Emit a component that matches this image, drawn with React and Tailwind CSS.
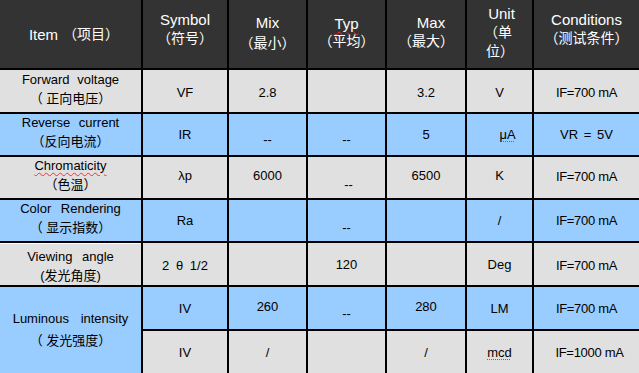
import React from "react";

/* ===== Styles ===== */
const font = "font-['Liberation_Sans','Noto_Sans_CJK_SC',sans-serif]";
const head = "bg-[#333333] text-white flex flex-col items-center justify-center text-[15px] leading-[19px]";
const cjk = "text-[14px] [font-feature-settings:'halt']";
const gray = "bg-[#e0e0e0]";
const blue = "bg-[#99ccff]";
const cell = "flex flex-col items-center justify-center text-[13px] leading-[19px] text-black";
const wavy = "underline decoration-wavy decoration-red-500 decoration-1 underline-offset-2";
const dotted = "underline decoration-dotted decoration-red-500 decoration-1 underline-offset-2";

const Dash = ({ bg, pb = "pb-[6px]", x = "" }) => (
  <div className={`${bg} ${cell} justify-end ${pb} ${x}`}>--</div>
);

export default function App() {
  return (
    <div
      className={`${font} w-[639px] h-[373px] bg-black grid gap-[2px] grid-cols-[141px_84px_77px_77px_78px_65px_105px] grid-rows-[68px_42px_41px_41px_41px_42px_42px_42px] overflow-hidden`}
    >
      {/* header */}
      <div className={`${head} flex-row`}>
        <span>Item</span>
        <span className={`${cjk} ml-3`}>（项目）</span>
      </div>
      <div className={`${head} pb-[10px]`}>
        <span>Symbol</span>
        <span className={cjk}>（符号）</span>
      </div>
      <div className={`${head} pb-[4px]`}>
        <span className="pt-[2px]">Mix</span>
        <span className={`${cjk} pt-[2px]`}>（最小）</span>
      </div>
      <div className={`${head} pb-[4px]`}>
        <span className={wavy}>Typ</span>
        <span className={`${cjk} -mt-[1px]`}>（平均）</span>
      </div>
      <div className={`${head} pb-[4px]`}>
        <span className="pl-[10px]">Max</span>
        <span className={cjk}>（最大）</span>
      </div>
      <div className={`${head} pb-[4px]`}>
        <span className="pl-[4px]">Unit</span>
        <span className={`${cjk} pl-[4px]`}>（单</span>
        <span className={`${cjk} pr-[6px]`}>位）</span>
      </div>
      <div className={`${head} pb-[10px]`}>
        <span>Conditions</span>
        <span className={cjk}>（测试条件）</span>
      </div>

      {/* Forward voltage */}
      <div className={`${gray} ${cell} pb-[4px]`}>
        <span className="[word-spacing:4px]">Forward voltage</span>
        <span>（ 正向电压）</span>
      </div>
      <div className={`${gray} ${cell} pt-[2px]`}>VF</div>
      <div className={`${gray} ${cell} pt-[2px]`}>2.8</div>
      <div className={gray}></div>
      <div className={`${gray} ${cell} pt-[2px]`}>3.2</div>
      <div className={`${gray} ${cell} pt-[2px]`}>V</div>
      <div className={`${gray} ${cell} pt-[2px] tracking-[-0.3px]`}>IF=700 mA</div>

      {/* Reverse current */}
      <div className={`${blue} ${cell} pb-[6px]`}>
        <span className="[word-spacing:5px]">Reverse current</span>
        <span>（反向电流）</span>
      </div>
      <div className={`${blue} ${cell}`}>IR</div>
      <Dash bg={blue} />
      <Dash bg={blue} />
      <div className={`${blue} ${cell}`}>5</div>
      <div className={`${blue} ${cell} pl-[16px]`}>
        <span className={dotted}>μA</span>
      </div>
      <div className={`${blue} ${cell} [word-spacing:2px]`}>VR = 5V</div>

      {/* Chromaticity */}
      <div className={`${gray} ${cell} pb-[6px]`}>
        <span className={wavy}>Chromaticity</span>
        <span>（色温）</span>
      </div>
      <div className={`${gray} ${cell} pb-[4px]`}>λp</div>
      <div className={`${gray} ${cell} pb-[4px]`}>6000</div>
      <Dash bg={gray} pb="pb-[4px]" x="pl-[4px]" />
      <div className={`${gray} ${cell} pb-[4px]`}>6500</div>
      <div className={`${gray} ${cell} pb-[4px]`}>K</div>
      <div className={`${gray} ${cell} pb-[2px] tracking-[-0.3px]`}>IF=700 mA</div>

      {/* Color Rendering */}
      <div className={`${blue} ${cell} pb-[6px]`}>
        <span className="[word-spacing:6px]">Color Rendering</span>
        <span>（ 显示指数）</span>
      </div>
      <div className={`${blue} ${cell}`}>Ra</div>
      <div className={blue}></div>
      <Dash bg={blue} pb="pb-[4px]" />
      <div className={blue}></div>
      <div className={`${blue} ${cell}`}>/</div>
      <div className={`${blue} ${cell} tracking-[-0.3px]`}>IF=700 mA</div>

      {/* Viewing angle */}
      <div className={`${gray} ${cell} pt-[3px] border-t border-white`}>
        <span className="[word-spacing:6px]">Viewing angle</span>
        <span>(发光角度)</span>
      </div>
      <div className={`${gray} ${cell} pt-[2px] [word-spacing:3px]`}>2 θ 1/2</div>
      <div className={gray}></div>
      <div className={`${gray} ${cell}`}>120</div>
      <div className={gray}></div>
      <div className={`${gray} ${cell}`}>Deg</div>
      <div className={`${gray} ${cell} pt-[2px] tracking-[-0.3px]`}>IF=700 mA</div>

      {/* Luminous intensity */}
      <div className={`${blue} ${cell} row-span-2 pb-[2px]`}>
        <span className="[word-spacing:8px]">Luminous intensity</span>
        <span className="mt-[3px]">（ 发光强度）</span>
      </div>
      <div className={`${blue} ${cell}`}>IV</div>
      <div className={`${blue} ${cell} pb-[4px]`}>260</div>
      <Dash bg={blue} />
      <div className={`${blue} ${cell} pb-[4px]`}>280</div>
      <div className={`${blue} ${cell}`}>LM</div>
      <div className={`${blue} ${cell} tracking-[-0.3px]`}>IF=700 mA</div>

      <div className={`${gray} ${cell}`}>IV</div>
      <div className={`${gray} ${cell}`}>/</div>
      <div className={gray}></div>
      <div className={`${gray} ${cell}`}>/</div>
      <div className={`${gray} ${cell}`}>
        <span className={dotted}>mcd</span>
      </div>
      <div className={`${gray} ${cell} pl-[6px] tracking-[-0.3px]`}>IF=1000 mA</div>
    </div>
  );
}
